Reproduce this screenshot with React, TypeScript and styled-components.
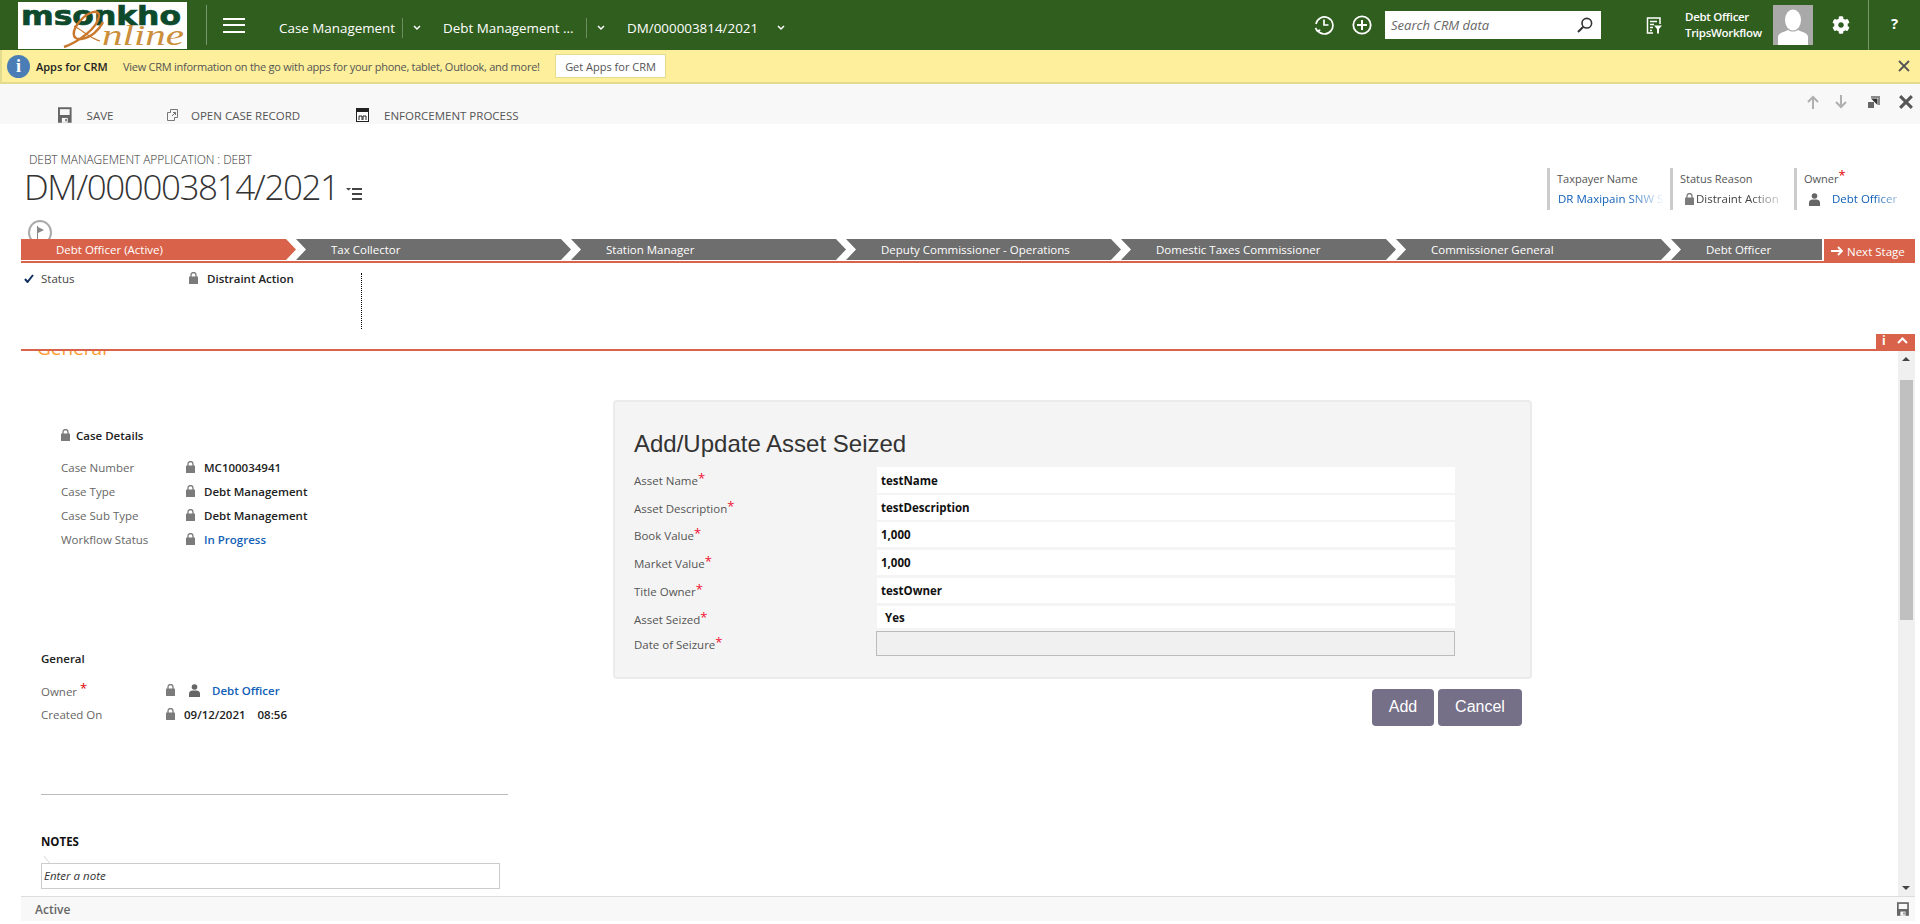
import React from "react";
import styled, { createGlobalStyle } from "styled-components";
import { FaCog } from "react-icons/fa";

const SANS = `"Open Sans", "Noto Sans", sans-serif`;
const ORANGE = "#d9634a";

const GlobalStyle = createGlobalStyle`
  html, body { margin: 0; padding: 0; background: #fff; overflow: hidden; }
  * { box-sizing: border-box; }
  body { font-family: ${SANS}; font-size: 11px; color: #444; }
`;

const Page = styled.div`
  width: 1920px;
  height: 924px;
  display: flex;
  flex-direction: column;
  overflow: hidden;
`;

/* top nav */
const TopBar = styled.header`
  height: 50px;
  flex: none;
  background: #2f5e1e;
  display: flex;
  align-items: center;
  color: #fff;
`;
const LogoBox = styled.div`
  width: 169px;
  height: 47px;
  margin-left: 18px;
  align-self: flex-start;
  margin-top: 2px;
  background: #fff;
`;
const BarSep = styled.div`
  width: 1px;
  height: 40px;
  background: rgba(255, 255, 255, 0.35);
  margin-left: 19px;
`;
const Burger = styled.div`
  width: 22px;
  height: 15px;
  margin: 0 34px 0 16px;
  border-top: 2px solid #fff;
  border-bottom: 2px solid #fff;
  position: relative;
  &::after {
    content: "";
    position: absolute;
    left: 0;
    right: 0;
    top: 4.5px;
    height: 2px;
    background: #fff;
  }
`;
const NavItem = styled.div<{ $w: number }>`
  width: ${(p) => p.$w}px;
  display: flex;
  align-items: center;
  font-size: 13.4px;
  height: 24px;
  margin-top: 6px;
`;
const NavLabel = styled.span`
  flex: 1;
  white-space: nowrap;
`;
const NavChevron = styled.span<{ $sep?: boolean }>`
  width: 28px;
  height: 20px;
  margin-top: 6px;
  display: flex;
  align-items: center;
  justify-content: center;
  border-left: ${(p) => (p.$sep ? "1px solid rgba(255,255,255,.3)" : "none")};
  margin-right: 13px;
`;
const BarRight = styled.div`
  margin-left: auto;
  display: flex;
  align-items: center;
  height: 50px;
`;
const RoundIcon = styled.div<{ $mr: number }>`
  width: 20px;
  height: 20px;
  margin-right: ${(p) => p.$mr}px;
`;
const SearchBox = styled.div`
  width: 216px;
  height: 28px;
  background: #fff;
  display: flex;
  align-items: center;
  justify-content: space-between;
  padding: 0 8px 0 6px;
  color: #666;
  font-style: italic;
  font-size: 13px;
  margin-right: 45px;
`;
const UserName = styled.div`
  width: 88px;
  margin-left: 23px;
  font-size: 11.5px;
  font-weight: 600;
  line-height: 16px;
  letter-spacing: -0.3px;
`;
const Avatar = styled.div`
  width: 40px;
  height: 40px;
`;
const GearWrap = styled.div`
  width: 55px;
  height: 50px;
  display: flex;
  align-items: center;
  justify-content: center;
  font-size: 18px;
`;
const HelpBox = styled.div`
  width: 52px;
  height: 50px;
  border-left: 1px solid rgba(255, 255, 255, 0.35);
  display: flex;
  align-items: center;
  justify-content: center;
  font-size: 15px;
  font-weight: 700;
  padding-bottom: 4px;
`;

/* notification */
const Notice = styled.div`
  height: 34px;
  flex: none;
  background: #fdef9b;
  border-bottom: 2px solid #e3dc8e;
  border-left: 2px solid #e3dc8e;
  display: flex;
  align-items: center;
  font-size: 11px;
  color: #555;
`;
const InfoDot = styled.div`
  width: 23px;
  height: 23px;
  border-radius: 50%;
  background: #4a7cb5;
  color: #fff;
  font: 700 18px "Liberation Serif", serif;
  display: flex;
  align-items: center;
  justify-content: center;
  margin-left: 5px;
`;
const NoticeTitle = styled.b`
  color: #222;
  font-weight: 600;
  width: 87px;
  margin-left: 6px;
  white-space: nowrap;
`;
const NoticeText = styled.span`
  width: 432px;
  white-space: nowrap;
  letter-spacing: -0.26px;
`;
const NoticeButton = styled.div`
  width: 111px;
  height: 24px;
  background: #fff;
  border: 1px solid #e3dc8e;
  display: flex;
  align-items: center;
  justify-content: center;
`;
const NoticeClose = styled.div`
  margin-left: auto;
  margin-right: 10px;
  display: flex;
`;

/* command bar */
const CommandBar = styled.div`
  height: 40px;
  flex: none;
  background: #f8f8f8;
  display: flex;
  padding-left: 58px;
  overflow: hidden;
`;
const CommandItem = styled.div<{ $w: number; $gap: number }>`
  width: ${(p) => p.$w}px;
  display: flex;
  align-items: center;
  gap: ${(p) => p.$gap}px;
  height: 20px;
  margin-top: 21px;
  font-size: 11.5px;
  color: #555;
  white-space: nowrap;
`;
const RecordNav = styled.div`
  margin-left: auto;
  display: flex;
  align-items: center;
  height: 20px;
  margin-top: 8px;
  padding-right: 7px;
  gap: 14px;
`;
const PopoutSlot = styled.span`
  display: flex;
  margin: 0 5px 0 6px;
`;

/* record header */
const RecordHeader = styled.div`
  height: 115px;
  flex: none;
  display: flex;
  justify-content: space-between;
`;
const HeaderLeft = styled.div`
  padding: 26px 0 0 21px;
`;
const EntityName = styled.div`
  font-size: 12px;
  font-weight: 300;
  color: #333;
  margin-left: 8px;
  line-height: 20px;
  letter-spacing: -0.1px;
`;
const RecordTitle = styled.div`
  display: flex;
  align-items: flex-end;
  gap: 7px;
  font-size: 35px;
  font-weight: 300;
  line-height: 44px;
  margin: -5px 0 0 3px;
  color: #333;
  letter-spacing: -1.4px;
`;
const Summary = styled.div`
  display: flex;
  margin-top: 44px;
  height: 42px;
`;
const SummaryCell = styled.div<{ $w: number }>`
  width: ${(p) => p.$w}px;
  border-left: 3px solid #ccc;
  padding-left: 7px;
  font-size: 11px;
`;
const SummaryLabel = styled.div`
  color: #555;
  line-height: 22px;
`;
const SummaryValue = styled.div<{ $link?: boolean }>`
  display: flex;
  align-items: center;
  gap: 2px;
  width: 108px;
  line-height: 18px;
  font-size: 11.5px;
  white-space: nowrap;
  overflow: hidden;
  color: ${(p) => (p.$link ? "#1160b7" : "#444")};
  -webkit-mask-image: linear-gradient(to right, #000 65%, transparent 100%);
  mask-image: linear-gradient(to right, #000 65%, transparent 100%);
  padding-left: 1px;
`;
const SummaryIcon = styled.span<{ $ml: number; $mr: number }>`
  display: flex;
  margin: 0 ${(p) => p.$mr}px 0 ${(p) => p.$ml}px;
`;
const Req = styled.span`
  color: #e00000;
  font-size: 13px;
  line-height: 1;
  vertical-align: 3px;
`;

/* process stages */
const StageBar = styled.div`
  margin: 0 5px 0 21px;
  flex: none;
  display: flex;
  height: 24px;
  border-bottom: 2px solid ${ORANGE};
  position: relative;
`;
const Stage = styled.div<{ $w: number; $active?: boolean; $last?: boolean }>`
  width: ${(p) => p.$w}px;
  flex: none;
  height: 21px;
  background: ${(p) => (p.$active ? ORANGE : "#6e6e6e")};
  color: #fff;
  font-size: 11.5px;
  line-height: 21px;
  padding-left: 35px;
  white-space: nowrap;
  clip-path: ${(p) =>
    p.$active
      ? "polygon(0 0, calc(100% - 10px) 0, 100% 50%, calc(100% - 10px) 100%, 0 100%)"
      : p.$last
      ? "polygon(0 0, 100% 0, 100% 100%, 0 100%, 10px 50%)"
      : "polygon(0 0, calc(100% - 10px) 0, 100% 50%, calc(100% - 10px) 100%, 0 100%, 10px 50%)"};
`;
const NextStage = styled.div`
  flex: 1;
  margin-left: 2px;
  height: 22px;
  background: ${ORANGE};
  color: #fff;
  font-size: 11.5px;
  display: flex;
  align-items: center;
  gap: 4px;
  padding: 2px 0 0 7px;
`;
const FlagBadge = styled.div`
  position: absolute;
  left: 7px;
  top: -19px;
  width: 24px;
  height: 25px;
  border-radius: 50%;
  background: #fff;
  border: 2px solid #aaa;
  display: flex;
  align-items: center;
  justify-content: center;
`;
const StageDetail = styled.div`
  margin: 0 5px 0 21px;
  height: 88px;
  flex: none;
  border-bottom: 2px solid ${ORANGE};
  position: relative;
`;
const StatusColumn = styled.div`
  width: 341px;
  height: 56px;
  margin-top: 10px;
  border-right: 1px dotted #000;
  display: flex;
  align-items: flex-start;
  font-size: 11.5px;
`;
const StatusLabel = styled.div`
  width: 168px;
  display: flex;
  align-items: center;
  gap: 7px;
  height: 14px;
  margin-top: -2px;
  padding-left: 3px;
`;
const StatusValue = styled.div`
  display: flex;
  align-items: center;
  gap: 9px;
  height: 14px;
  margin-top: -2px;
  font-weight: 600;
  color: #222;
`;
const CollapseTab = styled.div`
  position: absolute;
  right: 0;
  bottom: 0;
  width: 39px;
  height: 15px;
  background: ${ORANGE};
  color: #fff;
  display: flex;
  align-items: center;
  justify-content: space-between;
  padding: 0 7px 2px 6px;
  font-size: 12px;
  font-weight: 700;
`;

/* scrolled form */
const Content = styled.main`
  flex: 1;
  min-height: 0;
  margin-right: 5px;
  display: flex;
  overflow: hidden;
`;
const FormArea = styled.div`
  flex: 1;
  display: flex;
  overflow: hidden;
`;
const LeftColumn = styled.div`
  width: 613px;
  flex: none;
`;
const ClippedHeading = styled.div`
  margin: -13px 0 0 37px;
  height: 20px;
  line-height: 20px;
  font-size: 19px;
  font-weight: 400;
  color: #ff9a2e;
`;
const Section = styled.section<{ $left: number; $top: number; $valueX: number }>`
  margin: ${(p) => p.$top}px 0 0 ${(p) => p.$left}px;
  display: grid;
  grid-template-columns: ${(p) => p.$valueX}px 1fr;
  grid-template-rows: 32px;
  grid-auto-rows: 24px;
  align-items: center;
  font-size: 11.5px;
  color: #666;
`;
const SectionTitle = styled.div`
  grid-column: 1 / -1;
  align-self: start;
  height: 24px;
  display: flex;
  align-items: center;
  gap: 6px;
  font-weight: 600;
  color: #222;
`;
const FieldValue = styled.div`
  display: flex;
  align-items: center;
  gap: 9px;
  font-weight: 600;
  white-space: nowrap;
  color: #222;
  a {
    color: #1160b7;
    text-decoration: none;
  }
`;
const PersonSlot = styled.span`
  margin: 0 3px 0 5px;
  display: flex;
`;
const Divider = styled.hr`
  margin: 68px 0 0 41px;
  width: 467px;
  border: 0;
  border-top: 1px solid #bbb;
`;
const NotesTitle = styled.div`
  margin: 37px 0 0 41px;
  height: 20px;
  line-height: 20px;
  font-size: 11.5px;
  font-weight: 700;
  color: #111;
`;
const NoteInput = styled.div`
  margin: 11px 0 0 41px;
  width: 459px;
  height: 26px;
  border: 1px solid #ccc;
  padding-left: 2px;
  line-height: 24px;
  font-style: italic;
  font-size: 11.5px;
  color: #333;
  position: relative;
  &::before {
    content: "";
    position: absolute;
    left: -1px;
    top: -8px;
    width: 9px;
    height: 1px;
    background: #ddd;
    transform: rotate(50deg) translate(3px, 1px);
  }
`;

const RightColumn = styled.div`
  width: 919px;
  flex: none;
  padding-top: 49px;
`;
const Panel = styled.div`
  height: 279px;
  background: #f4f4f4;
  border: 2px solid #ebebeb;
  border-radius: 4px;
  padding: 0 0 0 19px;
`;
const PanelTitle = styled.h2`
  margin: 0;
  height: 65px;
  padding-top: 25px;
  font: 400 24px/34px "Liberation Sans", Arial, sans-serif;
  color: #333;
`;
const FieldGrid = styled.div`
  display: grid;
  grid-template-columns: 243px 578px;
  grid-template-rows: 28px 27px 28px 28px 28px 25px 25px;
  font-size: 11.5px;
`;
const FieldLabel = styled.div`
  display: flex;
  align-items: center;
  height: 26px;
  color: #555;
`;
const FieldStar = styled.span`
  color: #f01030;
  font-size: 13px;
  align-self: flex-start;
  line-height: 16px;
  margin-top: 3px;
`;
const InputBox = styled.div<{ $h: number; $indent?: number }>`
  height: ${(p) => p.$h}px;
  background: #fff;
  padding-left: ${(p) => p.$indent ?? 4}px;
  display: flex;
  align-items: center;
  font-weight: 700;
  color: #111;
`;
const DisabledBox = styled.div`
  height: 25px;
  margin-left: -1px;
  background: #f1f0f0;
  border: 1px solid #bbb;
`;
const ButtonRow = styled.div`
  display: flex;
  justify-content: flex-end;
  gap: 4px;
  margin-top: 10px;
  padding-right: 10px;
`;
const ActionButton = styled.button<{ $w: number }>`
  width: ${(p) => p.$w}px;
  height: 37px;
  border: 0;
  border-radius: 4px;
  background: #756f88;
  color: #fff;
  font: 400 16px "Liberation Sans", Arial, sans-serif;
  padding: 0 0 2px;
`;

const ScrollTrack = styled.div`
  width: 17px;
  flex: none;
  background: #f0f0f0;
  position: relative;
  padding-top: 29px;
`;
const ScrollThumb = styled.div`
  width: 13px;
  height: 240px;
  margin-left: 2px;
  background: #c0c0c0;
`;
const ArrowUp = styled.div`
  position: absolute;
  top: 6px;
  left: 4px;
  border: 4px solid transparent;
  border-top: 0;
  border-bottom: 4px solid #444;
`;
const ArrowDown = styled.div`
  position: absolute;
  bottom: 6px;
  left: 4px;
  border: 4px solid transparent;
  border-bottom: 0;
  border-top: 4px solid #444;
`;

const Footer = styled.footer`
  height: 25px;
  flex: none;
  margin: 0 5px 3px 21px;
  background: #f8f8f8;
  border-top: 1px solid #ddd;
  display: flex;
  align-items: center;
  justify-content: space-between;
  padding: 0 6px 0 14px;
  font-size: 12px;
  font-weight: 600;
  color: #666;
`;

/* icons */
const Lock = ({ size = 11, color = "#7b7b7b" }: { size?: number; color?: string }) => (
  <svg width={size - 2} height={size + 1} viewBox="0 0 9 12">
    <path d="M2 5V3a2.5 2.5 0 0 1 5 0v2" fill="none" stroke={color} strokeWidth="1.3" />
    <rect x="0" y="4.6" width="9" height="7.4" rx=".6" fill={color} />
  </svg>
);
const Person = () => (
  <svg width="11" height="13" viewBox="0 0 11 13" fill="#666">
    <circle cx="5.5" cy="3" r="2.8" />
    <path d="M0 13V9.5C0 7.5 2 6.500 3.500 6.500h4C9 6.500 11 7.500 11 9.500V13z" />
  </svg>
);
const SmallChevron = () => (
  <svg width="8" height="6" viewBox="0 0 8 6" fill="none" stroke="#fff" strokeWidth="1.5">
    <path d="M1 1l3 3 3-3" />
  </svg>
);
const SaveIcon = ({ size = 16, color = "#666" }: { size?: number; color?: string }) => (
  <svg width={size * 0.85} height={size} viewBox="0 0 14 16">
    <path d="M0 0h14v16H0z" fill={color} />
    <rect x="2" y="2" width="10" height="6" fill="#f8f8f8" />
    <rect x="4" y="11" width="6" height="5" fill="#f8f8f8" />
    <rect x="7.500" y="12" width="1.500" height="2.500" fill={color} />
  </svg>
);
const Cross = ({ size, color, width }: { size: number; color: string; width: number }) => (
  <svg width={size} height={size} viewBox="0 0 12 12" stroke={color} strokeWidth={width}>
    <path d="M1 1l10 10M11 1L1 11" />
  </svg>
);
const ArrowV = ({ down }: { down?: boolean }) => (
  <svg width="14" height="14" viewBox="0 0 14 14" fill="none" stroke="#b0b0b0" strokeWidth="2"
    style={down ? { transform: "rotate(180deg)" } : undefined}>
    <path d="M7 14V2M2 7l5-5 5 5" />
  </svg>
);

const stages = [
  { name: "Debt Officer (Active)", w: 275, active: true },
  { name: "Tax Collector", w: 275 },
  { name: "Station Manager", w: 275 },
  { name: "Deputy Commissioner - Operations", w: 275 },
  { name: "Domestic Taxes Commissioner", w: 275 },
  { name: "Commissioner General", w: 275 },
  { name: "Debt Officer", w: 151, last: true },
];

const caseRows = [
  ["Case Number", "MC100034941"],
  ["Case Type", "Debt Management"],
  ["Case Sub Type", "Debt Management"],
];

const assetRows: { label: string; value: string; h: number; indent?: number }[] = [
  { label: "Asset Name", value: "testName", h: 26 },
  { label: "Asset Description", value: "testDescription", h: 25 },
  { label: "Book Value", value: "1,000", h: 25 },
  { label: "Market Value", value: "1,000", h: 25 },
  { label: "Title Owner", value: "testOwner", h: 25 },
  { label: "Asset Seized", value: "Yes", h: 22, indent: 8 },
];

export default function App() {
  return (
    <Page>
      <GlobalStyle />
      <TopBar>
        <LogoBox>
          <svg width="169" height="47" viewBox="0 0 169 47">
            <text x="3" y="23" fontFamily="DejaVu Sans" fontWeight="700" fontSize="27" fill="#0d4a2c"
              stroke="#0d4a2c" strokeWidth=".7" textLength="160" lengthAdjust="spacingAndGlyphs">msonkho</text>
            <path d="M46 45C60 40 80 26 81 14c0-7-10-5-19 5-8 9-9 19 1 18 10-1 18-9 22-17" fill="none"
              stroke="#c9782e" strokeWidth="2.500" />
            <path d="M56 24C64 28 72 36 82 39" fill="none" stroke="#c9782e" strokeWidth="1.200" />
            <text x="84" y="43" fontFamily="Liberation Serif" fontStyle="italic" fontSize="30" fill="#cc8f3c"
              textLength="82" lengthAdjust="spacingAndGlyphs">nline</text>
          </svg>
        </LogoBox>
        <BarSep />
        <Burger />
        <NavItem $w={123}><NavLabel>Case Management</NavLabel></NavItem>
        <NavChevron $sep><SmallChevron /></NavChevron>
        <NavItem $w={143}><NavLabel>Debt Management ...</NavLabel></NavItem>
        <NavChevron $sep><SmallChevron /></NavChevron>
        <NavItem $w={140}><NavLabel>DM/000003814/2021</NavLabel></NavItem>
        <NavChevron><SmallChevron /></NavChevron>
        <BarRight>
          <RoundIcon $mr={18}>
            <svg width="20" height="20" viewBox="0 0 20 20" fill="none" stroke="#fff" strokeWidth="1.700">
              <path d="M3.500 15.500A8.500 8.500 0 1 0 2 9" />
              <path d="M10 4.500V10h4.500" />
              <path d="M1.500 13l1.800 3 3-1" />
            </svg>
          </RoundIcon>
          <RoundIcon $mr={13}>
            <svg width="20" height="20" viewBox="0 0 20 20" fill="none" stroke="#fff" strokeWidth="1.800">
              <circle cx="10" cy="10" r="8.700" />
              <path d="M10 5v10M5 10h10" strokeWidth="2" />
            </svg>
          </RoundIcon>
          <SearchBox>
            Search CRM data
            <svg width="16" height="16" viewBox="0 0 16 16" fill="none" stroke="#333" strokeWidth="1.600">
              <circle cx="9.800" cy="6.200" r="4.800" />
              <path d="M6.300 9.700L1 15" strokeWidth="2" />
            </svg>
          </SearchBox>
          <svg width="16" height="17" viewBox="0 0 16 17" fill="none" stroke="#fff">
            <path d="M14 7V1H1.500v15H7" strokeWidth="1.500" />
            <path d="M4 4.500h7M4 7.500h4M4 10.500h3M4 13.500h2" strokeWidth="1.300" />
            <path d="M8 8.500h8l-3 3.500v4.500h-2V12z" fill="#fff" stroke="none" />
          </svg>
          <UserName>
            Debt Officer
            <br />
            TripsWorkflow
          </UserName>
          <Avatar>
            <svg width="40" height="40" viewBox="0 0 40 40">
              <rect width="40" height="40" fill="#a9a9a9" />
              <ellipse cx="20" cy="15" rx="8" ry="10.500" fill="#fff" />
              <path d="M5 40V32c0-4 6-5 10-7 3 2 7 2 10 0 4 2 10 3 10 7v8z" fill="#fff" />
            </svg>
          </Avatar>
          <GearWrap><FaCog /></GearWrap>
          <HelpBox>?</HelpBox>
        </BarRight>
      </TopBar>

      <Notice>
        <InfoDot>i</InfoDot>
        <NoticeTitle>Apps for CRM</NoticeTitle>
        <NoticeText>View CRM information on the go with apps for your phone, tablet, Outlook, and more!</NoticeText>
        <NoticeButton>Get Apps for CRM</NoticeButton>
        <NoticeClose><Cross size={12} color="#555" width={1.800} /></NoticeClose>
      </Notice>

      <CommandBar>
        <CommandItem $w={109} $gap={15}><SaveIcon />SAVE</CommandItem>
        <CommandItem $w={189} $gap={13}>
          <svg width="11" height="12" viewBox="0 0 11 12" fill="none" stroke="#777">
            <path d="M.5 3.500h3v-3h7v8h-3v3h-7zM5 7l3.500-3.500M6 3.500h2.500V6" />
          </svg>
          OPEN CASE RECORD
        </CommandItem>
        <CommandItem $w={300} $gap={15}>
          <svg width="13" height="14" viewBox="0 0 13 14">
            <rect x=".5" y=".5" width="12" height="13" fill="#fff" stroke="#222" />
            <rect x="1" y="1" width="11" height="3" fill="#222" />
            <path d="M3 12V8h3v4M7 12V8h3v4" fill="none" stroke="#222" />
          </svg>
          ENFORCEMENT PROCESS
        </CommandItem>
        <RecordNav>
          <ArrowV />
          <ArrowV down />
          <PopoutSlot>
            <svg width="12" height="12" viewBox="0 0 12 12">
              <path d="M3 0h9v9h-2V2H3z" fill="#8a8a8a" />
              <rect x="0" y="6" width="6" height="6" fill="#666" />
              <path d="M3 2.500h6.500V9z" fill="#333" />
            </svg>
          </PopoutSlot>
          <Cross size={14} color="#555" width={2.600} />
        </RecordNav>
      </CommandBar>

      <RecordHeader>
        <HeaderLeft>
          <EntityName>DEBT MANAGEMENT APPLICATION : DEBT</EntityName>
          <RecordTitle>
            DM/000003814/2021
            <svg width="16" height="14" viewBox="0 0 16 14" fill="#444" style={{ marginBottom: 8 }}>
              <path d="M0 1h5L2.500 3.500zM6 1h10v2H6zM6 6h10v2H6zM6 11h10v2H6z" />
            </svg>
          </RecordTitle>
        </HeaderLeft>
        <Summary>
          <SummaryCell $w={123}>
            <SummaryLabel>Taxpayer Name</SummaryLabel>
            <SummaryValue $link>DR Maxipain SNW S</SummaryValue>
          </SummaryCell>
          <SummaryCell $w={124}>
            <SummaryLabel>Status Reason</SummaryLabel>
            <SummaryValue><SummaryIcon $ml={4} $mr={0}><Lock /></SummaryIcon>Distraint Action</SummaryValue>
          </SummaryCell>
          <SummaryCell $w={126}>
            <SummaryLabel>Owner<Req>*</Req></SummaryLabel>
            <SummaryValue $link><SummaryIcon $ml={4} $mr={10}><Person /></SummaryIcon>Debt Officer</SummaryValue>
          </SummaryCell>
        </Summary>
      </RecordHeader>

      <StageBar>
        <FlagBadge>
          <svg width="9" height="13" viewBox="0 0 9 13" fill="#888">
            <path d="M1 0h1v13H1zM2 1l6 3-6 3z" />
          </svg>
        </FlagBadge>
        {stages.map((s) => (
          <Stage key={s.name} $w={s.w} $active={s.active} $last={s.last}>{s.name}</Stage>
        ))}
        <NextStage>
          <svg width="12" height="10" viewBox="0 0 12 10" fill="none" stroke="#fff" strokeWidth="1.800">
            <path d="M0 5h10.500M7 1l4 4-4 4" />
          </svg>
          Next Stage
        </NextStage>
      </StageBar>

      <StageDetail>
        <StatusColumn>
          <StatusLabel>
            <svg width="10" height="9" viewBox="0 0 10 9" fill="none" stroke="#12305e" strokeWidth="2">
              <path d="M1 5l2.500 3L9 1" />
            </svg>
            Status
          </StatusLabel>
          <StatusValue><Lock />Distraint Action</StatusValue>
        </StatusColumn>
        <CollapseTab>
          <span>i</span>
          <svg width="11" height="7" viewBox="0 0 11 7" fill="none" stroke="#fff" strokeWidth="2">
            <path d="M1 6l4.500-4.500L10 6" />
          </svg>
        </CollapseTab>
      </StageDetail>

      <Content>
        <FormArea>
          <LeftColumn>
            <ClippedHeading>General</ClippedHeading>
            <Section $left={61} $top={65} $valueX={125}>
              <SectionTitle><Lock />Case Details</SectionTitle>
              {caseRows.map(([label, value]) => (
                <React.Fragment key={label}>
                  <div>{label}</div>
                  <FieldValue><Lock />{value}</FieldValue>
                </React.Fragment>
              ))}
              <div>Workflow Status</div>
              <FieldValue><Lock /><a href="#status">In Progress</a></FieldValue>
            </Section>
            <Section $left={41} $top={95} $valueX={125}>
              <SectionTitle>General</SectionTitle>
              <div>Owner <Req>*</Req></div>
              <FieldValue><Lock /><PersonSlot><Person /></PersonSlot><a href="#owner">Debt Officer</a></FieldValue>
              <div>Created On</div>
              <FieldValue><Lock />09/12/2021&nbsp;&nbsp;&nbsp;&nbsp;08:56</FieldValue>
            </Section>
            <Divider />
            <NotesTitle>NOTES</NotesTitle>
            <NoteInput>Enter a note</NoteInput>
          </LeftColumn>
          <RightColumn>
            <Panel>
              <PanelTitle>Add/Update Asset Seized</PanelTitle>
              <FieldGrid>
                {assetRows.map((r) => (
                  <React.Fragment key={r.label}>
                    <FieldLabel>{r.label}<FieldStar>*</FieldStar></FieldLabel>
                    <InputBox $h={r.h} $indent={r.indent}>{r.value}</InputBox>
                  </React.Fragment>
                ))}
                <FieldLabel>Date of Seizure<FieldStar>*</FieldStar></FieldLabel>
                <DisabledBox />
              </FieldGrid>
            </Panel>
            <ButtonRow>
              <ActionButton $w={62}>Add</ActionButton>
              <ActionButton $w={84}>Cancel</ActionButton>
            </ButtonRow>
          </RightColumn>
        </FormArea>
        <ScrollTrack>
          <ArrowUp />
          <ScrollThumb />
          <ArrowDown />
        </ScrollTrack>
      </Content>

      <Footer>
        Active
        <SaveIcon size={14} color="#666" />
      </Footer>
    </Page>
  );
}
